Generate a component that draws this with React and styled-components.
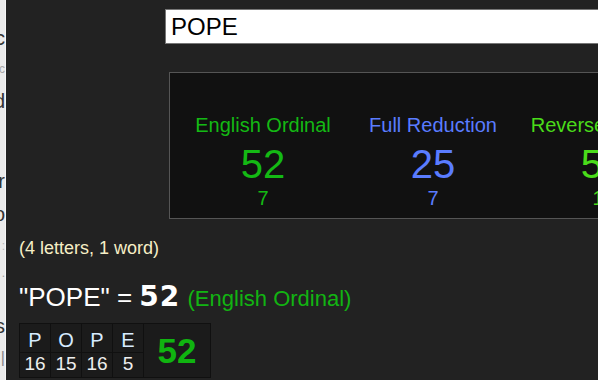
import React from "react";
import styled, { createGlobalStyle } from "styled-components";

const GlobalStyle = createGlobalStyle`
  html, body {
    margin: 0;
    padding: 0;
    background: #222222;
    font-family: "Liberation Sans", Arial, sans-serif;
  }
  * { box-sizing: border-box; }
`;

const Page = styled.div`
  display: flex;
  width: 598px;
  height: 380px;
  overflow: hidden;
  background: #222222;
`;

const Sidebar = styled.div`
  flex: 0 0 6px;
  width: 6px;
  height: 380px;
  overflow: hidden;
  background: #ebebeb;
  border-right: 1px solid #f6f6f6;
  display: flex;
  flex-direction: column;
`;

const SideLine = styled.div`
  display: flex;
  justify-content: flex-end;
  white-space: nowrap;
  margin-top: ${(p) => p.$mt}px;
  height: 20px;
  line-height: 20px;
  font-size: ${(p) => p.$size || 20}px;
  color: ${(p) => p.$color || "#333333"};
`;

const Main = styled.div`
  flex: 1 1 auto;
  min-width: 0;
  overflow: hidden;
  padding: 9px 0 0 13px;
`;

const SearchInput = styled.input`
  display: block;
  margin-left: 146px;
  width: 560px;
  height: 35px;
  padding: 0 5px;
  border: 1px solid #767676;
  background: #ffffff;
  color: #000000;
  font-family: "Liberation Sans", Arial, sans-serif;
  font-size: 24px;
  outline: none;
`;

const ResultsBox = styled.div`
  display: flex;
  margin-left: 150px;
  margin-top: 28px;
  width: 600px;
  height: 147px;
  border: 1px solid #555555;
  background: #111111;
  padding: 41px 0 0 8px;
  overflow: hidden;
`;

const CipherColumn = styled.div`
  flex: 0 0 170px;
  text-align: center;
  color: ${(p) => p.$color};
  white-space: nowrap;
`;

const CipherLabel = styled.div`
  font-size: 20px;
  line-height: 23px;
`;

const CipherValue = styled.div`
  font-size: 40px;
  line-height: 46px;
  margin-top: 4px;
`;

const CipherReduced = styled.div`
  font-size: 20px;
  line-height: 23px;
`;

const WordCount = styled.div`
  margin-top: 19px;
  font-size: 18px;
  color: #f6efc6;
`;

const Equation = styled.div`
  margin-top: 20px;
  font-size: 26px;
  line-height: 36px;
  color: #ffffff;
  white-space: nowrap;
`;

const EqTotal = styled.span`
  font-family: "DejaVu Sans", "Liberation Sans", sans-serif;
  font-weight: 900;
  font-size: 28px;
  letter-spacing: 1px;
`;

const EqCipher = styled.span`
  font-size: 22px;
  color: #12b412;
`;

const Breakdown = styled.div`
  display: inline-grid;
  margin-top: 6px;
  grid-template-columns: repeat(4, 30px) 66px;
  grid-template-rows: 28px 24px;
  gap: 1px;
  padding: 1px;
  background: #101010;
`;

const Cell = styled.div`
  display: flex;
  justify-content: center;
  background: #1b1b1b;
`;

const LetterCell = styled(Cell)`
  align-items: flex-end;
  font-size: 20px;
  line-height: 23px;
  color: #d6ebff;
`;

const NumberCell = styled(Cell)`
  align-items: flex-start;
  font-size: 19px;
  line-height: 22px;
  color: #eeeeee;
`;

const TotalCell = styled(Cell)`
  grid-column: 5;
  grid-row: 1 / span 2;
  align-items: center;
  font-size: 35px;
  font-weight: bold;
  line-height: 40px;
  color: #10b410;
`;

const ciphers = [
  { name: "English Ordinal", value: 52, reduced: 7, color: "#14b914" },
  { name: "Full Reduction", value: 25, reduced: 7, color: "#5a7cff" },
  { name: "Reverse Ordinal", value: 56, reduced: 11, color: "#4adc1a" },
];

const letters = [
  { ch: "P", v: 16 },
  { ch: "O", v: 15 },
  { ch: "P", v: 16 },
  { ch: "E", v: 5 },
];

const sideLines = [
  { t: "ec", mt: 28 },
  { t: "c", mt: 11, size: 12, color: "#a8a8a8" },
  { t: "d", mt: 12 },
  { t: "ir", mt: 60 },
  { t: "o", mt: 13 },
  { t: ":", mt: 12, size: 12, color: "#b8b8b8" },
  { t: ".", mt: 7, size: 12, color: "#a0a0a0" },
  { t: "s", mt: 33 },
  { t: "|", mt: 12, size: 16, color: "#888888" },
];

export default function App() {
  return (
    <>
      <GlobalStyle />
      <Page>
        <Sidebar>
          {sideLines.map((l, i) => (
            <SideLine key={i} $mt={l.mt} $size={l.size} $color={l.color}>
              {l.t}
            </SideLine>
          ))}
        </Sidebar>
        <Main>
          <SearchInput defaultValue="POPE" />
          <ResultsBox>
            {ciphers.map((c) => (
              <CipherColumn key={c.name} $color={c.color}>
                <CipherLabel>{c.name}</CipherLabel>
                <CipherValue>{c.value}</CipherValue>
                <CipherReduced>{c.reduced}</CipherReduced>
              </CipherColumn>
            ))}
          </ResultsBox>
          <WordCount>(4 letters, 1 word)</WordCount>
          <Equation>
            "POPE" = <EqTotal>52</EqTotal> <EqCipher>(English Ordinal)</EqCipher>
          </Equation>
          <div>
            <Breakdown>
              <TotalCell>52</TotalCell>
              {letters.map((l, i) => (
                <LetterCell key={"l" + i}>{l.ch}</LetterCell>
              ))}
              {letters.map((l, i) => (
                <NumberCell key={"n" + i}>{l.v}</NumberCell>
              ))}
            </Breakdown>
          </div>
        </Main>
      </Page>
    </>
  );
}
